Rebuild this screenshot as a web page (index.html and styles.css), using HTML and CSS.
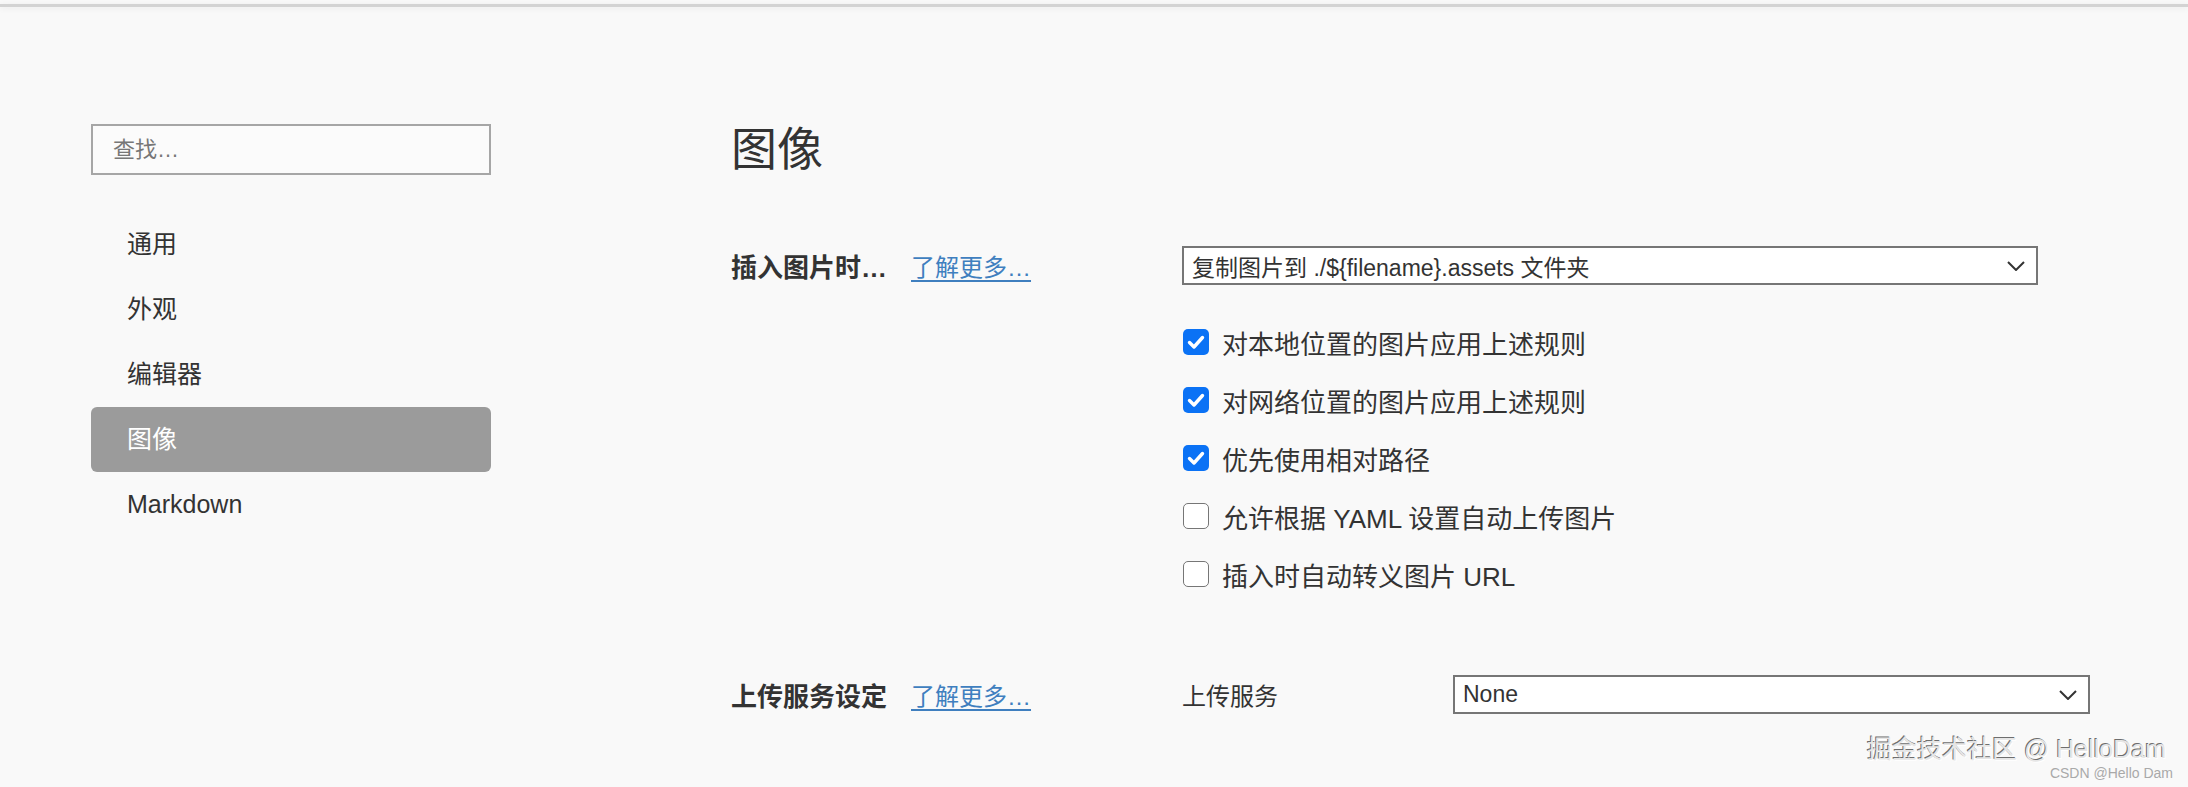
FILE: index.html
```html
<!DOCTYPE html>
<html lang="zh-CN">
<head>
    <meta charset="UTF-8">
    <meta name="viewport" content="width=device-width, initial-scale=1.0">
    <title>偏好设置 - 图像</title>
    <link rel="stylesheet" href="styles.css">
</head>
<body>
    <div class="topbar"></div>

    <div class="layout">
        <div class="sidebar">
            <div class="search">查找…</div>
            <ul class="nav">
                <li>通用</li>
                <li>外观</li>
                <li>编辑器</li>
                <li class="active">图像</li>
                <li>Markdown</li>
            </ul>
        </div>

        <div class="content">
            <h1>图像</h1>

            <div class="row">
                <div class="row-label">
                    <span class="label-title">插入图片时…</span>
                    <a class="more" href="#">了解更多…</a>
                </div>
                <div class="row-options">
                    <div class="select select-wide">
                        <span>复制图片到 ./${filename}.assets 文件夹</span>
                        <svg class="chevron" width="18" height="10" viewBox="0 0 18 10"><polyline points="1,1 9,9 17,1"/></svg>
                    </div>
                    <ul class="checklist">
                        <li><span class="box checked"><svg width="26" height="26" viewBox="0 0 26 26"><path d="M6.5 13.5 L11 18 L19.5 8.5"/></svg></span>对本地位置的图片应用上述规则</li>
                        <li><span class="box checked"><svg width="26" height="26" viewBox="0 0 26 26"><path d="M6.5 13.5 L11 18 L19.5 8.5"/></svg></span>对网络位置的图片应用上述规则</li>
                        <li><span class="box checked"><svg width="26" height="26" viewBox="0 0 26 26"><path d="M6.5 13.5 L11 18 L19.5 8.5"/></svg></span>优先使用相对路径</li>
                        <li><span class="box"></span>允许根据 YAML 设置自动上传图片</li>
                        <li><span class="box"></span>插入时自动转义图片 URL</li>
                    </ul>
                </div>
            </div>

            <div class="row row-upload">
                <div class="row-label">
                    <span class="label-title">上传服务设定</span>
                    <a class="more" href="#">了解更多…</a>
                </div>
                <div class="row-options inline">
                    <span class="field-name">上传服务</span>
                    <div class="select select-service">
                        <span>None</span>
                        <svg class="chevron" width="18" height="10" viewBox="0 0 18 10"><polyline points="1,1 9,9 17,1"/></svg>
                    </div>
                </div>
            </div>
        </div>
    </div>

    <div class="watermark">
        <div class="wm-main">掘金技术社区 @ HelloDam</div>
        <div class="wm-sub">CSDN @Hello Dam</div>
    </div>
</body>
</html>
```

FILE: styles.css
```css
body {
    margin: 0;
    padding-top: 4px;
    height: 783px;
    position: relative;
    overflow: hidden;
    font-family: "Liberation Sans", "Noto Sans CJK SC", sans-serif;
    color: #333;
    background-color: #f9f9f9;
}
.topbar {
    height: 0;
    border-top: 3px solid #d3d3d3;
    box-shadow: 0 1px 6px rgba(0, 0, 0, 0.08);
}
.layout {
    display: flex;
}

/* left column */
.sidebar {
    width: 400px;
    margin-left: 91px;
    padding-top: 117px;
}
.search {
    box-sizing: border-box;
    height: 51px;
    padding-left: 20px;
    line-height: 47px;
    font-size: 22px;
    color: #777;
    background-color: #fbfbfb;
    border: 2px solid #a6a6a6;
}
.nav {
    list-style: none;
    margin: 37px 0 0;
    padding: 0;
}
.nav li {
    height: 65px;
    line-height: 65px;
    padding-left: 36px;
    font-size: 25px;
    color: #333;
    border-radius: 6px;
}
.nav li.active {
    background-color: #9b9b9b;
    color: #fff;
}

/* right column */
.content {
    margin-left: 240px;
    padding-top: 114px;
}
h1 {
    margin: 0;
    font-size: 46px;
    font-weight: normal;
    line-height: 56px;
    color: #333;
}
.row {
    display: flex;
    align-items: flex-start;
    margin-top: 69px;
}
.row-upload {
    margin-top: 72px;
}
.row-label {
    width: 451px;
    height: 39px;
    display: flex;
    align-items: center;
}
.label-title {
    font-size: 26px;
    font-weight: bold;
    color: #333;
}
.more {
    margin-left: 24px;
    font-size: 24px;
    color: #3f7fbf;
    text-decoration: underline;
    text-underline-offset: 4px;
}
.row-options.inline {
    display: flex;
    align-items: center;
}
.field-name {
    width: 271px;
    font-size: 24px;
    color: #333;
}

.select {
    box-sizing: border-box;
    height: 39px;
    display: flex;
    align-items: center;
    justify-content: space-between;
    padding: 0 11px 0 8px;
    font-size: 23px;
    color: #333;
    background-color: #fff;
    border: 2.5px solid #767676;
}
.select-wide {
    width: 856px;
}
.select-service {
    width: 637px;
}
.chevron polyline {
    fill: none;
    stroke: #333;
    stroke-width: 2;
}

.checklist {
    list-style: none;
    margin: 28px 0 0;
    padding: 0;
}
.checklist li {
    height: 58px;
    display: flex;
    align-items: center;
    font-size: 26px;
    color: #333;
}
.box {
    box-sizing: border-box;
    width: 26px;
    height: 26px;
    margin: 0 13px 0 1px;
    border: 1.5px solid #767676;
    border-radius: 5px;
    background-color: #fff;
}
.box.checked {
    border: none;
    background-color: #0b72f5;
}
.box svg {
    display: block;
}
.box path {
    fill: none;
    stroke: #fff;
    stroke-width: 3.4;
    stroke-linecap: round;
    stroke-linejoin: round;
}

/* watermark sits over the bottom right corner */
.watermark {
    position: absolute;
    right: 15px;
    bottom: 5px;
    text-align: right;
}
.wm-main {
    padding-right: 7px;
    font-size: 25px;
    line-height: 30px;
    color: #e6e6e6;
    text-shadow: -1px -1px 0 #6e6e6e, 1px 1px 0 #fff;
}
.wm-sub {
    font-size: 14px;
    line-height: 18px;
    color: #a9a9a9;
}
```
